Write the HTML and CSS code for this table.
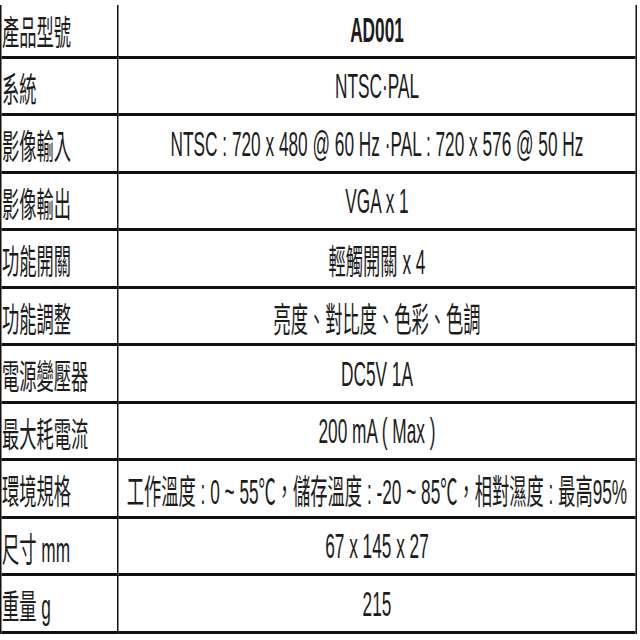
FILE: index.html
```html
<!DOCTYPE html>
<html lang="zh-Hant">
<head>
<meta charset="utf-8">
<title>AD001 規格</title>
<link rel="stylesheet" href="styles.css">
</head>
<body>
<div class="frame">
<div class="spec">
  <div class="label first">產品型號</div><div class="value first bold">AD001</div>
  <div class="label">系統</div><div class="value">NTSC·PAL</div>
  <div class="label">影像輸入</div><div class="value">NTSC : 720 x 480 @ 60 Hz ·PAL : 720 x 576 @ 50 Hz</div>
  <div class="label">影像輸出</div><div class="value">VGA x 1</div>
  <div class="label">功能開關</div><div class="value">輕觸開關 x 4</div>
  <div class="label">功能調整</div><div class="value">亮度、對比度、色彩、色調</div>
  <div class="label">電源變壓器</div><div class="value">DC5V 1A</div>
  <div class="label">最大耗電流</div><div class="value">200 mA ( Max )</div>
  <div class="label">環境規格</div><div class="value">工作溫度 : 0 ~ 55℃，儲存溫度 : -20 ~ 85℃，相對濕度 : 最高95%</div>
  <div class="label">尺寸 mm</div><div class="value">67 x 145 x 27</div>
  <div class="label">重量 g</div><div class="value">215</div>
</div>
</div>
</body>
</html>
```
FILE: styles.css
```css
html, body {
  margin: 0;
  padding: 0;
  background: #ffffff;
  overflow: hidden;
}

.frame {
  width: 637px;
  height: 640px;
  overflow: hidden;
}

.spec {
  display: grid;
  grid-template-columns: 234px 1fr;
  grid-template-rows: 53.5px repeat(10, 57.5px);
  width: 1274px;
  margin-top: 5px;
  box-sizing: border-box;
  border-left: 3px solid #111;
  border-right: 3px solid #111;
  transform: scaleX(0.5);
  transform-origin: 0 0;
  font-family: "Liberation Sans", "Noto Sans CJK TC", sans-serif;
  font-size: 34.5px;
  color: #1c1c1c;
}

.label,
.value {
  display: flex;
  align-items: center;
  box-sizing: border-box;
  border-bottom: 3px solid #111;
  white-space: nowrap;
}

.label {
  border-right: 3px solid #111;
  padding-left: 1px;
  padding-top: 2px;
}

.value {
  justify-content: center;
  padding-top: 2px;
}

.first {
  padding-top: 0;
}

.bold {
  font-weight: bold;
}
```
